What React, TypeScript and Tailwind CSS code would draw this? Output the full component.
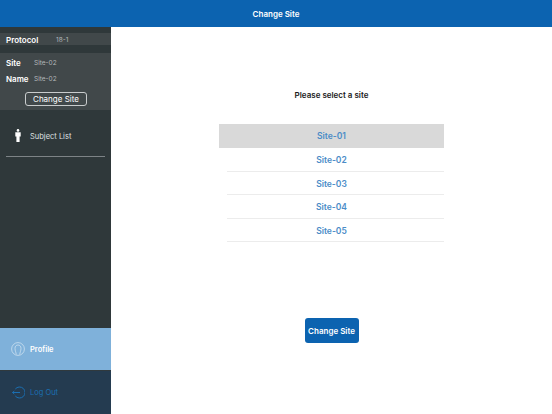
import React from 'react';

const SITES = ['Site-01', 'Site-02', 'Site-03', 'Site-04', 'Site-05'];

const font = "font-['Inter','Liberation_Sans',sans-serif]";

const App: React.FC = () => {
  return (
    <div className={`w-[552px] h-[414px] flex flex-col overflow-hidden bg-white ${font}`}>
      <header className="h-[27px] shrink-0 bg-[#0c63b0] flex items-center justify-center text-white text-[8px] font-semibold">
        Change Site
      </header>
      <div className="flex-1 flex min-h-0">
        {/* Side menu */}
        <aside className="w-[111px] shrink-0 bg-[#2f383a] flex flex-col">
          <div className="h-[6px]" />
          <div className="h-[12px] bg-[#41484a] flex items-center pl-[6px]">
            <span className="w-[50px] pt-px text-white text-[8px] font-semibold">Protocol</span>
            <span className="pt-[3px] text-[#b4b9bb] text-[6.5px]">18-1</span>
          </div>
          <div className="h-[8px]" />
          <div className="h-[57px] bg-[#41484a] flex flex-col pl-[6px] pt-px">
            <div className="h-[16px] flex items-center">
              <span className="w-[28px] pt-px text-white text-[8px] font-semibold">Site</span>
              <span className="pt-[3px] text-[#b4b9bb] text-[6.5px]">Site-02</span>
            </div>
            <div className="h-[16px] flex items-center">
              <span className="w-[28px] pt-px text-white text-[8px] font-semibold">Name</span>
              <span className="pt-[3px] text-[#b4b9bb] text-[6.5px]">Site-02</span>
            </div>
            <button className="mt-[6px] ml-[19px] w-[62px] h-[14px] border border-[#c9cccd] rounded-[3px] text-white text-[8px] flex items-center justify-center">
              Change Site
            </button>
          </div>
          <div className="h-[46px] pt-[4px] flex items-center pl-[15px]">
            <svg width="6" height="13" viewBox="0 0 6 13" fill="#fff">
              <circle cx="3" cy="1.4" r="1.3" />
              <path d="M0.300 3.200h5.400v4.300H4.600V13H1.400V7.500H0.300z" />
            </svg>
            <span className="ml-[9px] pt-[3px] text-[#dfe1e2] text-[7.5px]">Subject List</span>
          </div>
          <div className="mx-[6px] h-px bg-[#7d8386]" />
          <div className="flex-1" />
          <div className="h-[42px] bg-[#7fb1da] flex items-center pl-[11px]">
            <svg width="14" height="14" viewBox="0 0 14 14" fill="none" stroke="#d9e8f4" strokeWidth="0.7">
              <circle cx="7" cy="7" r="6.4" />
              <path d="M5.200 12.500C5.200 10.500 4 9 4 6.300 4 4.200 5.300 3 7 3s3 1.200 3 3.300C10 9 8.800 10.500 8.800 12.500" />
            </svg>
            <span className="ml-[5px] pt-[2px] text-white text-[7.5px] font-semibold">Profile</span>
          </div>
          <div className="h-px bg-[#30393d]" />
          <div className="h-[43px] bg-[#243b50] flex items-center pl-[12px]">
            <svg width="13" height="13" viewBox="0 0 13 13" fill="none" stroke="#1b6fb2" strokeWidth="1">
              <path d="M3.300 3A5.500 5.500 0 1 1 3.300 10" />
              <path d="M0.500 6.500H8" />
              <path d="M2.300 5L0.500 6.500L2.300 8" />
            </svg>
            <span className="ml-[5px] pt-[1px] text-[#1b6fb2] text-[7.5px]">Log Out</span>
          </div>
        </aside>

        {/* Site picker */}
        <main className="flex-1 flex flex-col items-center">
          <p className="mt-[62px] text-[#1a1a1a] text-[8px] font-semibold leading-[12px]">Please select a site</p>
          <ul className="mt-[23px] w-[225px]">
            {SITES.map((site, i) => (
              <li
                key={site}
                className={
                  i === 0
                    ? 'h-[24px] pt-px bg-[#d9d9d9] flex items-center justify-center text-[#4a8cc7] text-[8.5px] font-semibold'
                    : 'h-[23.6px] pt-[2px] ml-[8px] border-b border-[#ececec] flex items-center justify-center pr-[8px] text-[#4a8cc7] text-[8.5px] font-semibold'
                }
              >
                {site}
              </li>
            ))}
          </ul>
          <button className="mt-[76px] w-[54px] h-[25px] bg-[#0c63b0] rounded-[3px] text-white text-[8px] font-semibold flex items-center justify-center">
            Change Site
          </button>
        </main>
      </div>
    </div>
  );
};

export default App;
